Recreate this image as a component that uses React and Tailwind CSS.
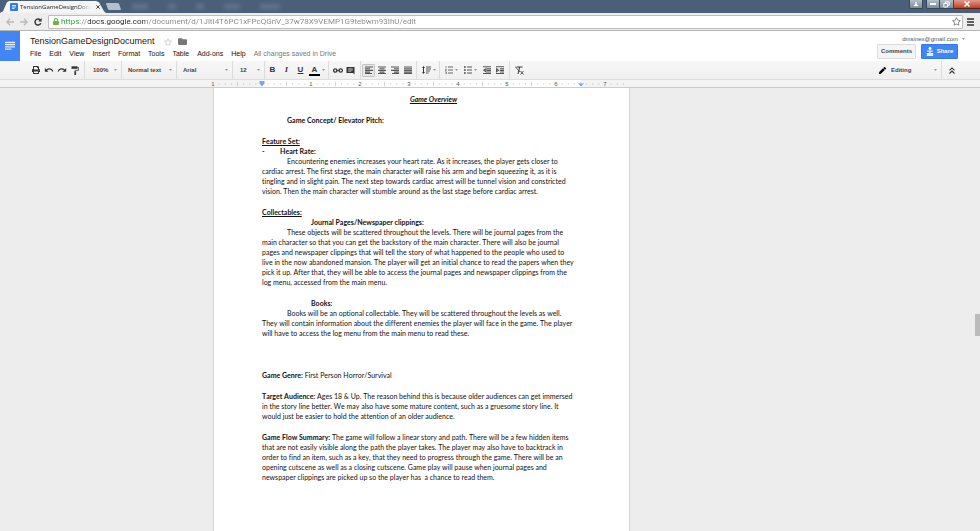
import {
  FaFolder,
  FaLock,
  FaPen,
  FaPrint,
  FaRegStar,
} from "react-icons/fa";
import { MdRedo, MdUndo } from "react-icons/md";

const MENUS = ["File", "Edit", "View", "Insert", "Format", "Tools", "Table", "Add-ons", "Help"];

// Small down arrow used beside every drop-down
function Caret() {
  return (
    <svg viewBox="0 0 4 2" className="w-[3px] h-[2px] shrink-0 fill-[#777] pointer-events-none">
      <path d="M0 0h4L2 2z" />
    </svg>
  );
}

function ToolButton({ label, active, children }) {
  return (
    <button
      aria-label={label}
      className={`w-[13px] h-[13px] shrink-0 flex items-center justify-center text-[#333] ${
        active ? "bg-[#e8e8e8] border border-[#c4c4c4] rounded-[1px]" : ""
      }`}
    >
      {children}
    </button>
  );
}

function Divider() {
  return <div className="w-px h-[19px] shrink-0 bg-[#dcdcdc]" />;
}

function ToolSelect({ label, value, className }) {
  return (
    <div className={`flex items-center shrink-0 pr-1 ${className}`}>
      <select
        aria-label={label}
        defaultValue={value}
        className="appearance-none flex-1 min-w-0 bg-transparent outline-none text-[6px] leading-[10px] font-bold text-[#444]"
      >
        <option>{value}</option>
      </select>
      <Caret />
    </div>
  );
}

function Lines({ d }) {
  return (
    <svg viewBox="0 0 8 8" className="w-2 h-2" fill="none" stroke="#555" strokeWidth="1.1">
      <path d={d} />
    </svg>
  );
}

function TitleBar() {
  return (
    <div className="h-[13px] flex items-start bg-[#4a6078]">
      <div className="w-[106px] h-[12px] mt-px pl-[10px] pr-[5px] flex items-center gap-[2px] bg-[#f5f5f5] [clip-path:polygon(0_100%,3px_85%,7px_10%,9px_0,96px_0,99px_10%,104px_85%,106px_100%)]">
        <svg viewBox="0 0 8 8" className="w-[8px] h-[8px] shrink-0">
          <rect width="8" height="8" rx="1" fill="#2d7cf0" />
          <path d="M2 2.500h4M2 4h4M2 5.500h2.500" stroke="#fff" strokeWidth=".8" />
        </svg>
        <span className="flex-1 whitespace-nowrap text-[6px] leading-[10px] font-['Open_Sans',sans-serif] text-[#222] [mask-image:linear-gradient(to_right,black_80%,transparent)]">
          TensionGameDesignDocu
        </span>
        <button aria-label="Close tab" className="w-[10px] flex justify-center">
          <svg viewBox="0 0 4 4" className="w-1 h-1" stroke="#333" strokeWidth="0.9">
            <path d="M.3.3l3.400 3.400M3.700.3L.3 3.700" />
          </svg>
        </button>
      </div>
      <button aria-label="New tab" className="w-[13px] h-[7px] mt-[3px] ml-px bg-[#b4c0cb] rounded-[1px] skew-x-[20deg]" />
      <div className="flex gap-5 ml-3 mt-1 blur-[2px]">
        <i className="w-4 h-[5px] bg-[#5f7790]" />
        <i className="w-2 h-[5px] bg-[#5f7790]" />
        <i className="w-2 h-[5px] bg-[#5f7790]" />
        <i className="w-4 h-[5px] bg-[#5f7790]" />
        <i className="w-5 h-[5px] bg-[#5f7790]" />
      </div>
      <div className="ml-auto flex items-start">
        <button aria-label="Profile" className="w-[14px] h-[9px] mr-[3px] flex items-center justify-center rounded-b-[2px] border border-t-0 border-[#35475a] bg-linear-to-b from-[#b4bfc9] to-[#7d8e9f]">
          <svg viewBox="0 0 8 6" className="w-[8px] h-[6px]" fill="#fff" stroke="#4b5b6b" strokeWidth=".4">
            <path d="M4 .3a1.400 1.400 0 011 2.400L7.500 5.500H.5L3 2.700A1.400 1.400 0 014 .3z" />
          </svg>
        </button>
        <button aria-label="Minimize" className="w-[14px] h-[9px] flex items-center justify-center rounded-bl-[2px] border border-t-0 border-[#35475a] bg-linear-to-b from-[#b4bfc9] to-[#7d8e9f]">
          <span className="w-[6px] h-[2px] bg-white" />
        </button>
        <button aria-label="Restore" className="w-[14px] h-[9px] flex items-center justify-center border border-t-0 border-l-0 border-[#35475a] bg-linear-to-b from-[#b4bfc9] to-[#7d8e9f]">
          <svg viewBox="0 0 7 7" className="w-[7px] h-[7px]" fill="none" stroke="#fff">
            <path d="M2.500 2V.8h3.700v3.500H5M.8 2.500H4.500v3.500H.8z" />
          </svg>
        </button>
        <button aria-label="Close" className="w-[26px] h-[9px] flex items-center justify-center border-b border-[#5b2018] bg-linear-to-b from-[#dd9a8c] to-[#c23a20]">
          <svg viewBox="0 0 6 6" className="w-[6px] h-[6px]" stroke="#fff" strokeWidth="1.500">
            <path d="M.5.5l5 5M5.500.5l-5 5" />
          </svg>
        </button>
      </div>
    </div>
  );
}

function AddressBar() {
  return (
    <div className="h-[18px] flex items-center bg-[#ededed] border-b border-[#b5b5b5] pl-[3px] pr-[3px]">
      <button aria-label="Back" className="w-[14px] flex justify-center">
        <svg viewBox="0 0 8 8" className="w-2 h-2" fill="none" stroke="#b9b9b9" strokeWidth="1.300">
          <path d="M8 4H1M4 .8L.8 4 4 7.200" />
        </svg>
      </button>
      <button aria-label="Forward" className="w-[14px] flex justify-center">
        <svg viewBox="0 0 8 8" className="w-2 h-2" fill="none" stroke="#b9b9b9" strokeWidth="1.300">
          <path d="M0 4h7M4 .8L7.200 4 4 7.200" />
        </svg>
      </button>
      <button aria-label="Reload" className="w-[14px] flex justify-center">
        <svg viewBox="0 0 8 8" className="w-2 h-2" fill="none" stroke="#333" strokeWidth="1.400">
          <path d="M6.800 5.200A3 3 0 116.200 1.900" />
          <path d="M7.600 0v3.400H4.200z" fill="#333" stroke="none" />
        </svg>
      </button>
      <div className="flex-1 min-w-0 h-[14px] ml-[3px] pl-1 pr-px flex items-center bg-white border border-[#bdbdbd] rounded-[1px]">
        <FaLock className="w-[6px] h-[7px] shrink-0 text-[#6fb544]" />
        <input
          aria-label="Address"
          defaultValue="https://docs.google.com/document/d/1JitI4T6PC1xFPcQGnV_37w78X9VEMP1G9tebwm93IhU/edit"
          className="flex-1 min-w-0 ml-[2px] outline-none text-[8px] leading-[12px] font-[Roboto,sans-serif] text-transparent caret-black bg-clip-text bg-[linear-gradient(to_right,#2a9a3c_19px,#888_19px,#888_27px,#222_27px,#222_84px,#888_84px)]"
        />
        <button aria-label="Bookmark this page">
          <FaRegStar className="w-[9px] h-[9px] text-[#777]" />
        </button>
      </div>
      <button aria-label="Chrome menu" className="w-[13px] ml-px flex justify-center">
        <svg viewBox="0 0 7 8" className="w-[7px] h-2" stroke="#333" strokeWidth="1.500">
          <path d="M0 1h7M0 4h7M0 7h7" />
        </svg>
      </button>
    </div>
  );
}

function DocsHeader() {
  return (
    <header className="h-[30px] flex bg-white">
      <a href="#home" aria-label="Docs home" className="w-5 bg-[#4285f4] flex items-center justify-center">
        <svg viewBox="0 0 10 10" className="w-[10px] h-[10px]" stroke="#e4eeff" strokeWidth="1.300">
          <path d="M0 1.500h10M0 3.700h10M0 5.900h10M0 8.100h6.500" />
        </svg>
      </a>
      <div className="pl-[10px] pt-1">
        <div className="flex items-center">
          <h1 className="text-[9px] leading-[13px] text-[#222]">TensionGameDesignDocument</h1>
          <button aria-label="Star" className="ml-[9px]">
            <FaRegStar className="w-[8px] h-[8px] text-[#ccc]" />
          </button>
          <button aria-label="Move to folder" className="ml-[6px]">
            <FaFolder className="w-[9px] h-[9px] text-[#777]" />
          </button>
        </div>
        <nav className="flex items-center gap-2 text-[7px] leading-[12px] text-[#111]">
          {MENUS.map((menu) => (
            <button key={menu}>{menu}</button>
          ))}
          <span className="text-[#777]">All changes saved in Drive</span>
        </nav>
      </div>
      <div className="ml-auto pt-[3px] pr-[15px] flex flex-col items-end">
        <button className="flex items-center gap-1 text-[6px] leading-[10px] text-[#555]">
          dmsinex@gmail.com
          <Caret />
        </button>
        <div className="flex gap-[5px] pr-[7px]">
          <button className="w-[39px] h-[15px] bg-[#f5f5f5] border border-[#dcdcdc] rounded-[1px] text-[6px] font-bold text-[#444]">
            Comments
          </button>
          <button className="w-[37px] h-[15px] flex items-center justify-center gap-[3px] bg-[#4285f4] border border-[#3079ed] rounded-[1px] text-[6px] font-bold text-white">
            <svg viewBox="0 0 8 9" className="w-[8px] h-[9px]" fill="#fff">
              <circle cx="4" cy="1.500" r="1.400" />
              <path d="M1.200 3.500h5.600v1.300H4.700V6h2.500v3H.8V6h2.500V4.800H1.200z" opacity=".85" />
            </svg>
            Share
          </button>
        </div>
      </div>
    </header>
  );
}

function Toolbar() {
  return (
    <div className="h-[19px] flex items-center pl-[29px] bg-linear-to-b from-[#f7f7f7] to-[#f0f0f0] border-b border-[#ddd]">
      <div className="flex pr-[3px]">
        <ToolButton label="Print"><FaPrint className="w-[8px] h-[8px]" /></ToolButton>
        <ToolButton label="Undo"><MdUndo className="w-[10px] h-[10px]" /></ToolButton>
        <ToolButton label="Redo"><MdRedo className="w-[10px] h-[10px]" /></ToolButton>
        <ToolButton label="Paint format">
          <svg viewBox="0 0 8 9" className="w-2 h-[9px]">
            <path d="M.5.3h6v2.500h-6z" fill="#333" />
            <path d="M6.500 1.500h1.100v2.800H4.200v1.500" fill="none" stroke="#333" strokeWidth=".8" />
            <path d="M3.400 5.300h1.700V9H3.400z" fill="#333" />
          </svg>
        </ToolButton>
      </div>
      <Divider />
      <ToolSelect label="Zoom" value="100%" className="w-[36px] pl-2" />
      <Divider />
      <ToolSelect label="Styles" value="Normal text" className="w-[54px] pl-[6px]" />
      <Divider />
      <ToolSelect label="Font" value="Arial" className="w-[55px] pl-[6px]" />
      <Divider />
      <ToolSelect label="Font size" value="12" className="w-[31px] pl-[7px]" />
      <Divider />
      <div className="flex items-center gap-px pl-px pr-[3px] text-[8px] leading-[10px]">
        <ToolButton label="Bold"><b>B</b></ToolButton>
        <ToolButton label="Italic"><b className="italic font-serif">I</b></ToolButton>
        <ToolButton label="Underline"><b className="underline">U</b></ToolButton>
        <ToolButton label="Text color">
          <b className="w-[11px] h-[11px] border-b-2 border-black">A</b>
        </ToolButton>
        <Caret />
      </div>
      <Divider />
      <div className="flex pl-[2px] pr-[3px]">
        <ToolButton label="Insert link">
          <svg viewBox="0 0 10 5" className="w-[10px] h-[5px]" fill="none" stroke="#333" strokeWidth="1.200">
            <rect x=".6" y=".8" width="3.400" height="3.400" rx="1.700" />
            <rect x="6" y=".8" width="3.400" height="3.400" rx="1.700" />
            <path d="M3.500 2.500h3" />
          </svg>
        </ToolButton>
        <ToolButton label="Insert comment">
          <svg viewBox="0 0 9 9" className="w-[9px] h-[9px]">
            <path d="M.5 1h8v7.500L7 7H.5z" fill="#333" />
            <path d="M2.200 2.800h4.600M2.200 4h4.600M2.200 5.200h3.200" stroke="#fff" strokeWidth=".6" />
          </svg>
        </ToolButton>
      </div>
      <Divider />
      <div className="flex pl-px pr-[2px]">
        <ToolButton label="Left align" active><Lines d="M0 1h8M0 2.700h5M0 4.400h8M0 6.100h5M0 7.500h7" /></ToolButton>
        <ToolButton label="Center align"><Lines d="M0 1h8M1.500 2.700h5M0 4.400h8M1.500 6.100h5M0 7.500h8" /></ToolButton>
        <ToolButton label="Right align"><Lines d="M0 1h8M3 2.700h5M0 4.400h8M3 6.100h5M1 7.500h7" /></ToolButton>
        <ToolButton label="Justify"><Lines d="M0 1h8M0 2.700h8M0 4.400h8M0 6.100h8M0 7.500h8" /></ToolButton>
      </div>
      <Divider />
      <div className="flex items-center pl-[3px] pr-[3px]">
        <ToolButton label="Line spacing">
          <svg viewBox="0 0 9 8" className="w-[9px] h-2">
            <path d="M1.500 0L3 2H0zM1.500 8L3 6H0zM1 2h1v4H1z" fill="#333" />
            <path d="M4 1h5M4 3h5M4 5h4M4 7h2.500" stroke="#555" />
          </svg>
        </ToolButton>
        <Caret />
      </div>
      <Divider />
      <div className="flex items-center pl-[2px] pr-[3px]">
        <ToolButton label="Numbered list">
          <svg viewBox="0 0 8 8" className="w-2 h-2" fill="none" stroke="#555">
            <path d="M1 0v2M0 3.300h1.500L.3 4.700h1.400M0 6h1.500v2H0" strokeWidth=".6" />
            <path d="M3 1h5M3 4h5M3 7h5" strokeWidth=".9" />
          </svg>
        </ToolButton>
        <span className="mr-[3px]"><Caret /></span>
        <ToolButton label="Bulleted list">
          <svg viewBox="0 0 8 8" className="w-2 h-2" stroke="#444">
            <path d="M0 1h1.700M0 4h1.700M0 7h1.700" strokeWidth="1.500" />
            <path d="M3 1h5M3 4h5M3 7h5" strokeWidth=".9" />
          </svg>
        </ToolButton>
        <span className="mr-[3px]"><Caret /></span>
        <ToolButton label="Decrease indent"><Lines d="M0 .8h8M4 2.700h4M4 4.400h4M4 6h4M0 7.500h8M3 2.600L.8 4.200 3 5.800z" /></ToolButton>
        <ToolButton label="Increase indent"><Lines d="M0 .8h8M4 2.700h4M4 4.400h4M4 6h4M0 7.500h8M.5 2.600l2.200 1.600L.5 5.800z" /></ToolButton>
      </div>
      <Divider />
      <div className="pl-[3px]">
        <ToolButton label="Clear formatting">
          <svg viewBox="0 0 9 9" className="w-[9px] h-[9px]" fill="none" stroke="#333">
            <path d="M1.500 1h6M4.700 1L3 8" />
            <path d="M5.500 5l3 3.500M8.500 5l-3 3.500M0 .5l5 5.500" strokeWidth=".8" />
          </svg>
        </ToolButton>
      </div>
      <div className="ml-auto flex items-center pr-[22px]">
        <FaPen className="w-[7px] h-[7px] text-black" />
        <ToolSelect label="Mode" value="Editing" className="w-[55px] pl-[5px]" />
        <Divider />
        <span className="ml-[3px]">
          <ToolButton label="Hide menus">
            <svg viewBox="0 0 6 7" className="w-[6px] h-[7px]" fill="none" stroke="#333" strokeWidth="1.100">
              <path d="M.5 3.300L3 .9l2.500 2.400M.5 6.500L3 4.100l2.500 2.400" />
            </svg>
          </ToolButton>
        </span>
      </div>
    </div>
  );
}

// 49px per inch, with the left margin one inch wide
function Ruler() {
  const ticks = [];
  for (let i = 1; i < 68; i++) {
    if (i % 8 !== 0) ticks.push(i);
  }
  return (
    <div className="h-2 flex bg-[#f3f3f3] border-b border-[#ccc] pr-[137px]">
      <svg viewBox="0 0 417 7" className="w-[417px] h-[7px] mx-auto overflow-visible">
        <rect x="49" width="319" height="7" fill="#fff" />
        {ticks.map((i) => (
          <path
            key={i}
            d={i % 4 === 0 ? "M0 2v4" : "M0 3v2"}
            transform={`translate(${i * 6.125} 0)`}
            stroke={i % 4 === 0 ? "#bbb" : "#ccc"}
            strokeWidth=".7"
          />
        ))}
        {[1, 0, 1, 2, 3, 4, 5, 6, 7].map((n, i) =>
          i === 1 ? null : (
            <text key={i} x={i * 49} y="6" textAnchor="middle" className="text-[6px] fill-[#555]">
              {n}
            </text>
          )
        )}
        <path d="M46.500 1h5v2.500L49 6.500 46.500 3.500z" fill="#7ba4f5" />
        <path d="M365 3.500h6L368 6.500z" fill="#7ba4f5" />
      </svg>
    </div>
  );
}

function DocumentPage() {
  return (
    <main className="flex-1 flex bg-[#ededed] pr-[137px] relative">
      <article className="w-[417px] mx-auto pl-12 pt-[6px] pb-12 bg-white border-x border-[#d5d5d5] font-[Lato,sans-serif] [font-kerning:none] [font-variant-ligatures:none] text-[7px] leading-[10px] text-[#111] whitespace-nowrap flex flex-col gap-[11px]">
        <h2 className="mr-6 text-center font-bold italic underline">Game Overview</h2>
        <h3 className="pl-[25px] font-bold">Game Concept/ Elevator Pitch:</h3>

        <section>
          <h3 className="font-bold underline">Feature Set:</h3>
          <h4 className="flex font-bold">
            <span className="w-[18px]">-</span>Heart Rate:
          </h4>
          <p className="indent-[25px]">
            Encountering enemies increases your heart rate. As it increases, the player gets closer to<br />
            cardiac arrest. The first stage, the main character will raise his arm and begin squeezing it, as it is<br />
            tingling and in slight pain. The next step towards cardiac arrest will be tunnel vision and constricted<br />
            vision. Then the main character will stumble around as the last stage before cardiac arrest.
          </p>
        </section>

        <section>
          <h3 className="font-bold underline">Collectables:</h3>
          <h4 className="pl-[49px] font-bold">Journal Pages/Newspaper clippings:</h4>
          <p className="indent-[25px]">
            These objects will be scattered throughout the levels. There will be journal pages from the<br />
            main character so that you can get the backstory of the main character. There will also be journal<br />
            pages and newspaper clippings that will tell the story of what happened to the people who used to<br />
            live in the now abandoned mansion. The player will get an initial chance to read the papers when they<br />
            pick it up. After that, they will be able to access the journal pages and newspaper clippings from the<br />
            log menu, accessed from the main menu.
          </p>
        </section>

        <section className="mb-[21px]">
          <h4 className="pl-[49px] font-bold">Books:</h4>
          <p className="indent-[25px]">
            Books will be an optional collectable. They will be scattered throughout the levels as well.<br />
            They will contain information about the different enemies the player will face in the game. The player<br />
            will have to access the log menu from the main menu to read these.
          </p>
        </section>

        <p><b>Game Genre:</b> First Person Horror/Survival</p>
        <p>
          <b>Target Audience:</b> Ages 18 &amp; Up. The reason behind this is because older audiences can get immersed<br />
          in the story line better. We may also have some mature content, such as a gruesome story line. It<br />
          would just be easier to hold the attention of an older audience.
        </p>
        <p>
          <b>Game Flow Summary:</b> The game will follow a linear story and path. There will be a few hidden items<br />
          that are not easily visible along the path the player takes. The player may also have to backtrack in<br />
          order to find an item, such as a key, that they need to progress through the game. There will be an<br />
          opening cutscene as well as a closing cutscene. Game play will pause when journal pages and<br />
          newspaper clippings are picked up so the player has&nbsp; a chance to read them.
        </p>
      </article>
      {/* Scrollbar thumb */}
      <div className="absolute right-0 top-[226px] w-[5px] h-[22px] bg-[#bbb]" />
    </main>
  );
}

export default function App() {
  return (
    <div className="min-h-screen flex flex-col bg-[#ededed] font-['Liberation_Sans',Arial,sans-serif]">
      <TitleBar />
      <AddressBar />
      <DocsHeader />
      <Toolbar />
      <Ruler />
      <DocumentPage />
    </div>
  );
}
